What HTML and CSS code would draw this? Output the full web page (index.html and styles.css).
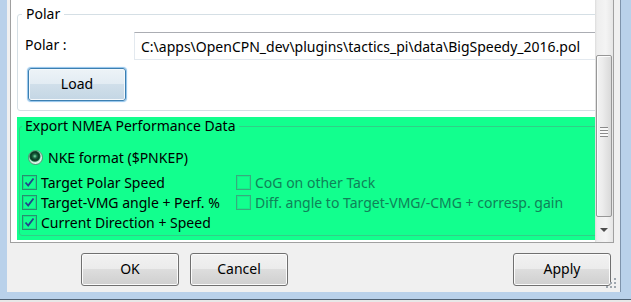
FILE: index.html
```html
<!DOCTYPE html>
<html lang="en">
<head>
    <meta charset="UTF-8">
    <meta name="viewport" content="width=device-width, initial-scale=1.0">
    <title>Tactics Preferences</title>
    <link rel="stylesheet" href="styles.css">
</head>
<body>
    <div class="window">
        <div class="client">
            <div class="scroll-box">
                <div class="panel">
                    <fieldset class="group polar-group">
                        <legend>Polar</legend>
                        <div class="polar-row">
                            <label for="polarPath">Polar :</label>
                            <input type="text" id="polarPath" class="path-input" value="C:\apps\OpenCPN_dev\plugins\tactics_pi\data\BigSpeedy_2016.pol">
                        </div>
                        <button class="btn btn-load">Load</button>
                    </fieldset>

                    <div class="export-box">
                        <fieldset class="group export-group">
                            <legend>Export NMEA Performance Data</legend>
                            <div class="radio-row">
                                <span class="radio"></span>
                                <span>NKE format ($PNKEP)</span>
                            </div>
                            <div class="check-grid">
                                <div class="check checked"><span class="box"><svg viewBox="0 0 13 13"><path d="M2.5 6.5 L5.2 9.5 L10.5 2.5"/></svg></span>Target Polar Speed</div>
                                <div class="check disabled"><span class="box"></span>CoG on other Tack</div>
                                <div class="check checked"><span class="box"><svg viewBox="0 0 13 13"><path d="M2.5 6.5 L5.2 9.5 L10.5 2.5"/></svg></span>Target-VMG angle + Perf. %</div>
                                <div class="check disabled"><span class="box"></span>Diff. angle to Target-VMG/-CMG + corresp. gain</div>
                                <div class="check checked"><span class="box"><svg viewBox="0 0 13 13"><path d="M2.5 6.5 L5.2 9.5 L10.5 2.5"/></svg></span>Current Direction + Speed</div>
                            </div>
                        </fieldset>
                    </div>
                </div>

                <div class="vscroll">
                    <div class="track">
                        <div class="thumb"><span class="grip"></span></div>
                    </div>
                    <div class="arrow-down"></div>
                </div>
            </div>

            <div class="button-row">
                <button class="btn">OK</button>
                <button class="btn">Cancel</button>
                <span class="spacer"></span>
                <button class="btn">Apply</button>
            </div>

            <!-- size grip in the corner -->
            <svg class="size-grip" width="11" height="11" viewBox="0 0 11 11">
                <rect x="8" y="0" width="2" height="2"/>
                <rect x="4" y="4" width="2" height="2"/>
                <rect x="8" y="4" width="2" height="2"/>
                <rect x="0" y="8" width="2" height="2"/>
                <rect x="4" y="8" width="2" height="2"/>
                <rect x="8" y="8" width="2" height="2"/>
            </svg>
        </div>
    </div>
</body>
</html>
```

FILE: styles.css
```css
body {
    margin: 0;
    background-color: #e8e8e8;
    font-family: "Noto Sans", "Open Sans", sans-serif;
    font-size: 14px;
    color: #000;
}
.window {
    width: 631px;
    height: 299px;
    background-color: #b9d1ea;
    border-bottom: 1px solid #4f6173;
    overflow: hidden;
}
.client {
    position: relative;
    margin-left: 7px;
    width: 613px;
    height: 292px;
    background-color: #f0f0f0;
    border-right: 1px solid #7e93ab;
}

/* scrolled window with the settings panel */
.scroll-box {
    display: flex;
    margin-left: 3px;
    width: 602px;
    height: 242px;
    border: 1px solid #a0a0a0;
    border-top: none;
    background-color: #fff;
}
.panel {
    width: 584px;
    height: 242px;
    overflow: hidden;
    flex-shrink: 0;
}
.group {
    margin: 0;
    padding: 0;
    min-width: 0;
    border: 1px solid #d5dfe5;
    border-radius: 3px;
}
.group legend {
    line-height: 18px;
    padding: 0 4px;
}
.polar-group {
    margin: 5px 0 0 6px;
    width: 700px;
    padding-bottom: 9px;
}
.polar-group legend {
    margin-left: 4px;
}
.polar-row {
    display: flex;
    align-items: center;
    margin-top: 9px;
}
.polar-row label {
    width: 109px;
    margin-left: 7px;
    padding-bottom: 3px;
}
.path-input {
    width: 520px;
    height: 28px;
    box-sizing: border-box;
    padding: 0 0 0 6px;
    border: 1px solid #e3e9ef;
    border-top-color: #abadb3;
    font-family: inherit;
    font-size: 14px;
    color: #000;
    outline: none;
}

/* win7 push buttons */
.btn {
    width: 98px;
    height: 33px;
    padding: 0 0 2px 0;
    border: 1px solid #707070;
    border-radius: 3px;
    background: linear-gradient(#f2f2f2 0%, #ebebeb 49%, #dddddd 50%, #cfcfcf 100%);
    box-shadow: inset 0 0 0 1px #fbfbfb;
    font-family: inherit;
    font-size: 14px;
    color: #000;
}
.btn-load {
    display: block;
    margin: 8px 0 0 10px;
    border-color: #3c7fb1;
    background: linear-gradient(#edf3f7 0%, #e2ecf3 49%, #d0dfea 50%, #c4d6e4 100%);
    box-shadow: inset 0 0 0 1px #f4f8fb, 0 0 1px 1px #8fc3ec;
}

/* green export area */
.export-box {
    margin: 6px 0 0 6px;
    height: 123px;
    background-color: #12ff8e;
    overflow: hidden;
}
.export-group {
    margin-left: 2px;
    width: 640px;
    padding-bottom: 3px;
    border-color: #30cf88;
}
.export-group legend {
    margin-left: 2px;
    padding: 0 3px;
}
.radio-row {
    display: flex;
    align-items: center;
    height: 20px;
    margin: 12px 0 0 8px;
    gap: 5px;
}
.radio {
    width: 13px;
    height: 13px;
    border: 1px solid #5e8f78;
    border-radius: 50%;
    background: radial-gradient(circle at 45% 40%, #7be2a8 0, #1c6a45 2px, #0a3520 4px, #0f5a37 5px, #b9ecd2 6px, #dff7ea 7px);
}
.check-grid {
    display: grid;
    grid-template-columns: 214px auto;
    grid-auto-rows: 20px;
    margin: 5px 0 0 2px;
}
.check {
    display: flex;
    align-items: center;
    gap: 4px;
    white-space: nowrap;
}
.check .box {
    width: 13px;
    height: 13px;
    border: 1px solid #2a8e70;
    box-shadow: inset 0 0 0 1px #0de884;
}
.check .box svg {
    display: block;
    width: 13px;
    height: 13px;
}
.check .box path {
    fill: none;
    stroke: #24448c;
    stroke-width: 1.8;
}
.check.disabled {
    color: #0f8258;
}
.check.disabled .box {
    border-color: #37ab7e;
    box-shadow: inset 0 0 0 1px #14ee88;
}

/* vertical scrollbar */
.vscroll {
    width: 18px;
    display: flex;
    flex-direction: column;
    background: linear-gradient(to right, #dcdcdc 0, #eeeeee 2px, #f4f4f4 60%, #e6e6e6 100%);
}
.track {
    height: 224px;
    padding-top: 55px;
    box-sizing: border-box;
}
.thumb {
    height: 162px;
    margin: 0 1px 0 1px;
    border: 1px solid #979797;
    border-radius: 2px;
    box-sizing: border-box;
    background: linear-gradient(to right, #f3f3f3 0, #ececec 40%, #d9d9d9 100%);
    box-shadow: inset 1px 1px 0 #fcfcfc;
    display: flex;
    align-items: center;
    justify-content: center;
}
.grip {
    width: 8px;
    height: 10px;
    margin-top: -8px;
    background: repeating-linear-gradient(#8a8a8a 0, #8a8a8a 1px, #f8f8f8 1px, #f8f8f8 3px);
}
.arrow-down {
    height: 18px;
    display: flex;
    align-items: center;
    justify-content: center;
}
.arrow-down::before {
    content: "";
    border-left: 4px solid transparent;
    border-right: 4px solid transparent;
    border-top: 4px solid #4d4d4d;
    margin-top: -6px;
}

/* dialog buttons */
.button-row {
    display: flex;
    gap: 11px;
    margin: 10px 9px 0 74px;
}
.spacer {
    flex: 1;
}
.size-grip {
    position: absolute;
    right: 3px;
    bottom: 3px;
    fill: #9ea6ae;
}
```
